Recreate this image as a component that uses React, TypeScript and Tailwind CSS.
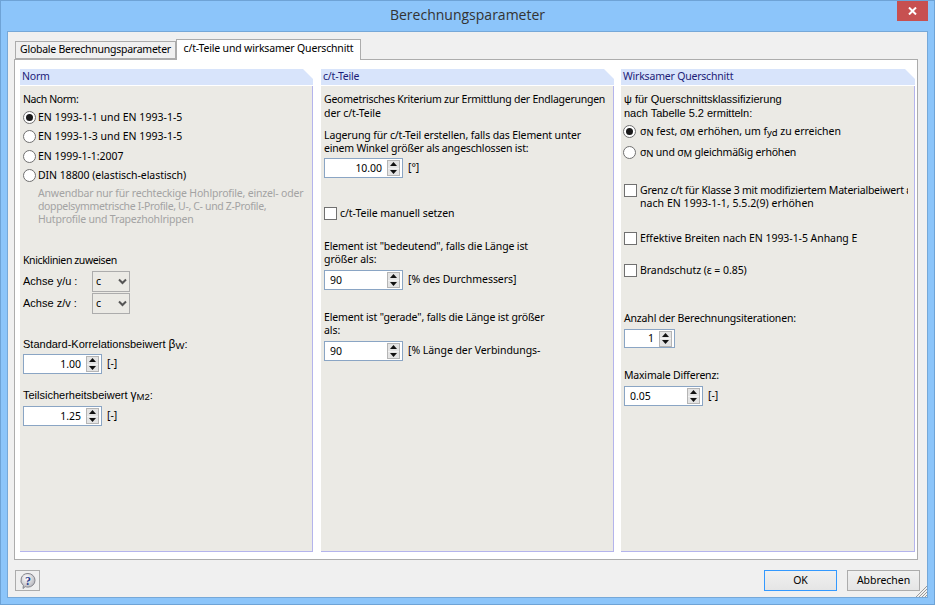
import React from 'react';

const ui = "font-['Noto_Sans',sans-serif] text-[10.5px] tracking-[-0.05px]";
const arial = "font-['Liberation_Sans',sans-serif] text-[11px] tracking-normal";

const Line: React.FC<{ top?: string; className?: string; children: React.ReactNode }> = ({
  top = '',
  className = '',
  children,
}) => <div className={`h-[13px] leading-[12px] whitespace-nowrap ${top} ${className}`}>{children}</div>;

const Radio: React.FC<{ checked?: boolean }> = ({ checked }) => (
  <span className="flex h-[13px] w-[13px] shrink-0 items-center justify-center rounded-full border border-[#707070] bg-white">
    {checked && <span className="h-[7px] w-[7px] rounded-full bg-[#1a1a1a]" />}
  </span>
);

const Check = () => <span className="h-[13px] w-[13px] shrink-0 border border-[#707070] bg-white" />;

const Spinner: React.FC<{
  value: string;
  width: string;
  height?: string;
  left?: boolean;
  unit?: string;
}> = ({ value, width, height = 'h-[20px]', left, unit }) => (
  <div className="flex items-center">
    <div
      className={`flex items-center border border-[#8aa5c4] bg-white pr-[2px] ${height} ${width} ${left ? 'pl-[5px]' : ''}`}
    >
      <span className={`flex-1 leading-[17px] ${left ? '' : 'pr-[5px] text-right'}`}>{value}</span>
      <span className="flex h-[16px] w-[13px] flex-col gap-[1px] border border-[#b5b5b5] bg-[#f2f2f2]">
        <span className="flex flex-1 items-center justify-center bg-[#e4e4e4]">
          <svg width="7" height="4" viewBox="0 0 7 4">
            <path d="M3.5 0L7 4H0z" fill="#111" />
          </svg>
        </span>
        <span className="flex flex-1 items-center justify-center bg-[#e4e4e4]">
          <svg width="7" height="4" viewBox="0 0 7 4">
            <path d="M0 0h7L3.5 4z" fill="#111" />
          </svg>
        </span>
      </span>
    </div>
    {unit && <span className="ml-[5px] whitespace-nowrap">{unit}</span>}
  </div>
);

const Select = () => (
  <div className="flex h-[21px] w-[38px] items-center justify-between border border-[#acacac] bg-[#ebeae5] pl-[3px] pr-[2px]">
    <span>c</span>
    <svg width="9" height="7" viewBox="0 0 9 7">
      <path d="M1 1.5l3.5 3.500L8 1.500" fill="none" stroke="#555" strokeWidth="2" />
    </svg>
  </div>
);

const Panel: React.FC<{ title: string; width: string; children: React.ReactNode }> = ({
  title,
  width,
  children,
}) => (
  <div className={`flex h-[483px] flex-col ${width}`}>
    <div className="relative h-[16px] bg-[#d8e4fb] pl-[2px] leading-[15px] tracking-[-0.2px] text-[#1c1c78] [clip-path:polygon(0_0,calc(100%-10px)_0,100%_10px,100%_100%,0_100%)]">
      {title}
    </div>
    <div className="h-[1px] bg-white" />
    <div className="flex-1 overflow-hidden border-b border-r border-[#b4b4ec] bg-[#ebeae5] pl-[3px] text-black">
      {children}
    </div>
  </div>
);

const Sub: React.FC<{ children: React.ReactNode }> = ({ children }) => (
  <span className="relative top-[1px] text-[9.5px]">{children}</span>
);

export default function App() {
  return (
    <div className={`flex h-[605px] w-[935px] flex-col overflow-hidden border border-[#6ea3d6] bg-[#8cc5fa] ${ui}`}>
      {/* Title bar */}
      <div className="relative h-[30px] shrink-0 text-center">
        <span className="font-['Open_Sans',sans-serif] text-[14px] leading-[28px] tracking-normal text-[#333]">
          Berechnungsparameter
        </span>
        <div className="absolute right-[6px] top-0 flex h-[20px] w-[31px] items-center justify-center bg-[#c75050]">
          <svg width="9" height="8" viewBox="0 0 9 8">
            <path d="M1 0.5l7 7M8 0.5l-7 7" stroke="#fff" strokeWidth="2" />
          </svg>
        </div>
      </div>

      {/* Client area */}
      <div className="relative mx-[6px] flex h-[567px] shrink-0 flex-col border border-[#76a8d8] bg-[#f0f0f0] px-[6px]">
        {/* Tabs */}
        <div className="z-10 flex h-[27px] shrink-0 items-end whitespace-nowrap pl-[1px] text-black">
          <div className="flex h-[18px] w-[161px] items-center justify-center border border-[#acacac] bg-[#f0f0f0] tracking-[-0.25px]">
            Globale Berechnungsparameter
          </div>
          <div className="-mb-[1px] flex h-[21px] w-[185px] items-start justify-center border border-b-0 border-[#acacac] bg-white pt-[1px] leading-[15px] tracking-[-0.17px]">
            c/t-Teile und wirksamer Querschnitt
          </div>
        </div>

        {/* Tab page */}
        <div className="flex h-[501px] w-[904px] shrink-0 gap-[8px] border border-[#acacac] bg-white pl-[5px] pt-[9px]">
          <Panel title="Norm" width="w-[293px]">
            <Line top="mt-[7px]" className="tracking-[-0.4px]">Nach Norm:</Line>
            <div className="mt-[5px] flex h-[13px] items-center gap-[2px] whitespace-nowrap tracking-[0.03px]"><Radio checked />EN 1993-1-1 und EN 1993-1-5</div>
            <div className="mt-[6px] flex h-[13px] items-center gap-[2px] whitespace-nowrap tracking-[0.03px]"><Radio />EN 1993-1-3 und EN 1993-1-5</div>
            <div className="mt-[7px] flex h-[13px] items-center gap-[2px] whitespace-nowrap"><Radio />EN 1999-1-1:2007</div>
            <div className="mt-[6px] flex h-[13px] items-center gap-[2px] whitespace-nowrap"><Radio />DIN 18800 (elastisch-elastisch)</div>
            <div className="ml-[15px] mt-[5px] text-[#a3a3a3]">
              <Line className="tracking-[-0.18px]">Anwendbar nur für rechteckige Hohlprofile, einzel- oder</Line>
              <Line className="tracking-[-0.35px]">doppelsymmetrische I-Profile, U-, C- und Z-Profile,</Line>
              <Line className="tracking-[-0.2px]">Hutprofile und Trapezhohlrippen</Line>
            </div>
            <Line top="mt-[28px]" className="tracking-[-0.4px]">Knicklinien zuweisen</Line>
            <div className="mt-[4px] flex items-center">
              <span className={`w-[69px] ${arial}`}>Achse y/u :</span>
              <Select />
            </div>
            <div className="mt-[1px] flex items-center">
              <span className={`w-[69px] ${arial}`}>Achse z/v :</span>
              <Select />
            </div>
            <Line top="mt-[24px]" className={arial}>
              Standard-Korrelationsbeiwert <span className="text-[12px]">β</span><Sub>W</Sub>:
            </Line>
            <div className="mt-[3px]"><Spinner value="1.00" width="w-[79px]" unit="[-]" /></div>
            <Line top="mt-[15px]" className={arial}>
              Teilsicherheitsbeiwert <span className="text-[12px]">γ</span><Sub>M2</Sub>:
            </Line>
            <div className="mt-[4px]"><Spinner value="1.25" width="w-[79px]" unit="[-]" /></div>
          </Panel>

          <Panel title="c/t-Teile" width="w-[293px]">
            <Line top="mt-[7px]" className="tracking-[-0.25px]">Geometrisches Kriterium zur Ermittlung der Endlagerungen</Line>
            <Line top="mt-[1px]">der c/t-Teile</Line>
            <Line top="mt-[9px]" className="tracking-[-0.12px]">Lagerung für c/t-Teil erstellen, falls das Element unter</Line>
            <Line className="tracking-[-0.19px]">einem Winkel größer als angeschlossen ist:</Line>
            <div className="mt-[3px]"><Spinner value="10.00" width="w-[79px]" unit="[°]" /></div>
            <div className="mt-[29px] flex h-[13px] items-center gap-[3px] whitespace-nowrap"><Check />c/t-Teile manuell setzen</div>
            <Line top="mt-[20px]" className="tracking-[-0.15px]">Element ist "bedeutend", falls die Länge ist</Line>
            <Line>größer als:</Line>
            <div className="mt-[4px]"><Spinner left value="90" width="w-[79px]" unit="[% des Durchmessers]" /></div>
            <Line top="mt-[21px]" className="tracking-[-0.15px]">Element ist "gerade", falls die Länge ist größer</Line>
            <Line>als:</Line>
            <div className="mt-[4px]"><Spinner left value="90" width="w-[79px]" unit="[% Länge der Verbindungs-" /></div>
          </Panel>

          <div className="-ml-[1px]">
            <Panel title="Wirksamer Querschnitt" width="w-[294px]">
              <Line top="mt-[7px]" className={arial}>ψ für Querschnittsklassifizierung</Line>
              <Line top="mt-[1px]" className={arial}>nach Tabelle 5.2 ermitteln:</Line>
              <div className="-ml-[1px] mt-[5px] flex h-[13px] items-center gap-[4px] whitespace-nowrap">
                <Radio checked />
                <span>σ<Sub>N</Sub> fest, σ<Sub>M</Sub> erhöhen, um f<Sub>yd</Sub> zu erreichen</span>
              </div>
              <div className="-ml-[1px] mt-[8px] flex h-[13px] items-center gap-[4px] whitespace-nowrap tracking-[-0.2px]">
                <Radio />
                <span>σ<Sub>N</Sub> und σ<Sub>M</Sub> gleichmäßig erhöhen</span>
              </div>
              <div className="mt-[25px] flex h-[13px] w-[284px] items-center gap-[3px] overflow-hidden whitespace-nowrap tracking-[-0.22px]">
                <Check />Grenz c/t für Klasse 3 mit modifiziertem Materialbeiwert ε
              </div>
              <Line top="ml-[16px]" className="tracking-[0.05px]">nach EN 1993-1-1, 5.5.2(9) erhöhen</Line>
              <div className="mt-[22px] flex h-[13px] items-center gap-[3px] whitespace-nowrap"><Check />Effektive Breiten nach EN 1993-1-5 Anhang E</div>
              <div className="mt-[19px] flex h-[13px] items-center gap-[3px] whitespace-nowrap"><Check />Brandschutz (ε = 0.85)</div>
              <Line top="mt-[35px]" className="tracking-[-0.17px]">Anzahl der Berechnungsiterationen:</Line>
              <div className="mt-[4px]"><Spinner value="1" width="w-[51px]" height="h-[19px]" /></div>
              <Line top="mt-[21px]" className="tracking-[-0.2px]">Maximale Differenz:</Line>
              <div className="mt-[4px]"><Spinner left value="0.05" width="w-[79px]" unit="[-]" /></div>
            </Panel>
          </div>
        </div>

        {/* Footer buttons */}
        <div className="mt-[10px] flex items-start pl-[1px] text-black">
          <div className="flex h-[21px] w-[25px] items-center justify-center border border-[#acacac] bg-[#efefef]">
            <svg width="18" height="18" viewBox="0 0 18 18">
              <defs>
                <radialGradient id="bubble" cx="0.4" cy="0.3" r="0.8">
                  <stop offset="0" stopColor="#ffffff" />
                  <stop offset="1" stopColor="#a8a8b0" />
                </radialGradient>
              </defs>
              <path d="M9 1.500a7 6.800 0 0 1 0 13.600c-1 0-2-.2-2.800-.5L4 16.500l.4-3A7 6.800 0 0 1 9 1.500z" fill="url(#bubble)" stroke="#85858c" strokeWidth="1" />
              <text x="9" y="12.500" textAnchor="middle" fontSize="12" fontWeight="700" fontFamily="Liberation Serif" fill="#2a3f8f">?</text>
            </svg>
          </div>
          <div className="ml-auto mr-[1px] flex gap-[10px]">
            <button className="h-[21px] w-[73px] border border-[#3399ff] bg-gradient-to-b from-[#f0f0f0] to-[#e5e5e5]">OK</button>
            <button className="h-[21px] w-[73px] border border-[#acacac] bg-gradient-to-b from-[#f0f0f0] to-[#e5e5e5]">Abbrechen</button>
          </div>
        </div>

        {/* Size grip */}
        <svg className="absolute bottom-0 right-0" width="12" height="12" viewBox="0 0 12 12">
          <path d="M12 1L1 12M12 4L4 12M12 7L7 12M12 10L10 12" stroke="#9a9a9a" strokeWidth="1" />
        </svg>
      </div>
    </div>
  );
}
